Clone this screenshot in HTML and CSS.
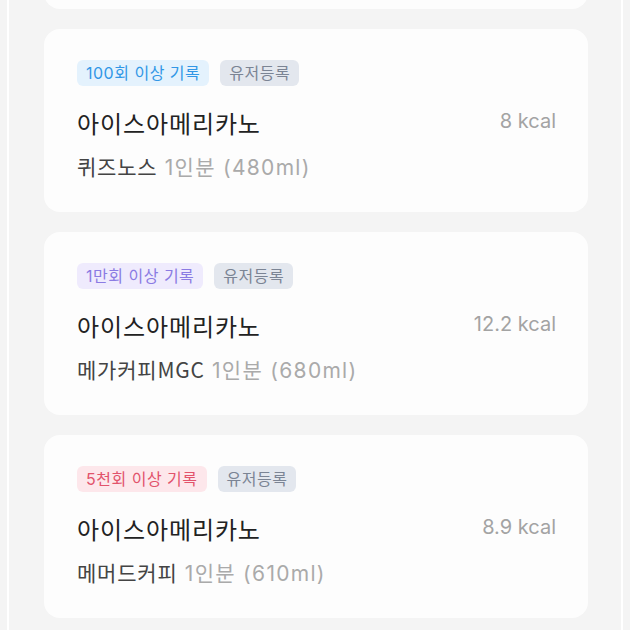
FILE: index.html
```html
<!DOCTYPE html>
<html lang="ko">
<head>
  <meta charset="UTF-8" />
  <title>기록 목록</title>
  <link rel="stylesheet" href="styles.css">
</head>
<body>
  <div class="frame">
    <div class="record-list">
      <div class="record-card record-card--cut"></div>

      <div class="record-card">
        <div class="badge-row">
          <span class="badge badge-blue">100회 이상 기록</span>
          <span class="badge badge-user">유저등록</span>
        </div>
        <div class="record-main">
          <span class="record-title">아이스아메리카노</span>
          <span class="record-kcal">8 kcal</span>
        </div>
        <div class="record-sub"><span class="brand">퀴즈노스</span> 1인분 (480ml)</div>
      </div>

      <div class="record-card">
        <div class="badge-row">
          <span class="badge badge-purple">1만회 이상 기록</span>
          <span class="badge badge-user">유저등록</span>
        </div>
        <div class="record-main">
          <span class="record-title">아이스아메리카노</span>
          <span class="record-kcal">12.2 kcal</span>
        </div>
        <div class="record-sub"><span class="brand">메가커피MGC</span> 1인분 (680ml)</div>
      </div>

      <div class="record-card">
        <div class="badge-row">
          <span class="badge badge-red">5천회 이상 기록</span>
          <span class="badge badge-user">유저등록</span>
        </div>
        <div class="record-main">
          <span class="record-title">아이스아메리카노</span>
          <span class="record-kcal">8.9 kcal</span>
        </div>
        <div class="record-sub"><span class="brand">메머드커피</span> 1인분 (610ml)</div>
      </div>
    </div>
  </div>
</body>
</html>
```

FILE: styles.css
```css
body {
  font-family: Inter, 'Noto Sans CJK KR', sans-serif;
  margin: 0;
  padding: 0;
  background-color: #f4f4f4;
  height: 630px;
  overflow: hidden;
}
.frame {
  margin: 0 7px;
  height: 630px;
  border-left: 2px solid #fff;
  border-right: 2px solid #fff;
  padding: 0 33px 0 35px;
  overflow: hidden;
}
.record-list {
  display: flex;
  flex-direction: column;
  gap: 20px;
}
.record-card {
  background-color: #fdfdfd;
  border-radius: 16px;
  height: 183px;
  box-sizing: border-box;
  padding: 31px 32px 0 33px;
}
.record-card--cut {
  margin-top: -174px;
}
.badge-row {
  display: flex;
  gap: 11px;
}
.badge {
  font-size: 16px;
  line-height: 26px;
  height: 26px;
  padding: 0 9px;
  border-radius: 6px;
  letter-spacing: 0.5px;
}
.badge-blue {
  background-color: #e4f2fd;
  color: #3197e6;
}
.badge-purple {
  background-color: #efebfd;
  color: #8b7be3;
}
.badge-red {
  background-color: #fde7eb;
  color: #e2536b;
}
.badge-user {
  background-color: #e3e7ee;
  color: #7b8494;
}
.record-main {
  display: flex;
  justify-content: space-between;
  align-items: flex-start;
  margin-top: 21px;
}
.record-title {
  font-family: 'Noto Sans CJK KR', sans-serif;
  font-size: 24px;
  line-height: 32px;
  color: #222;
  letter-spacing: 0.9px;
}
.record-kcal {
  font-size: 20px;
  line-height: 28px;
  color: #a3a3a3;
}
.record-sub {
  margin-top: 13px;
  font-size: 21px;
  line-height: 28px;
  color: #aaa;
  letter-spacing: 1.3px;
}
.brand {
  font-family: 'Noto Sans CJK KR', Inter, sans-serif;
  color: #444;
  letter-spacing: 0.8px;
}
```
